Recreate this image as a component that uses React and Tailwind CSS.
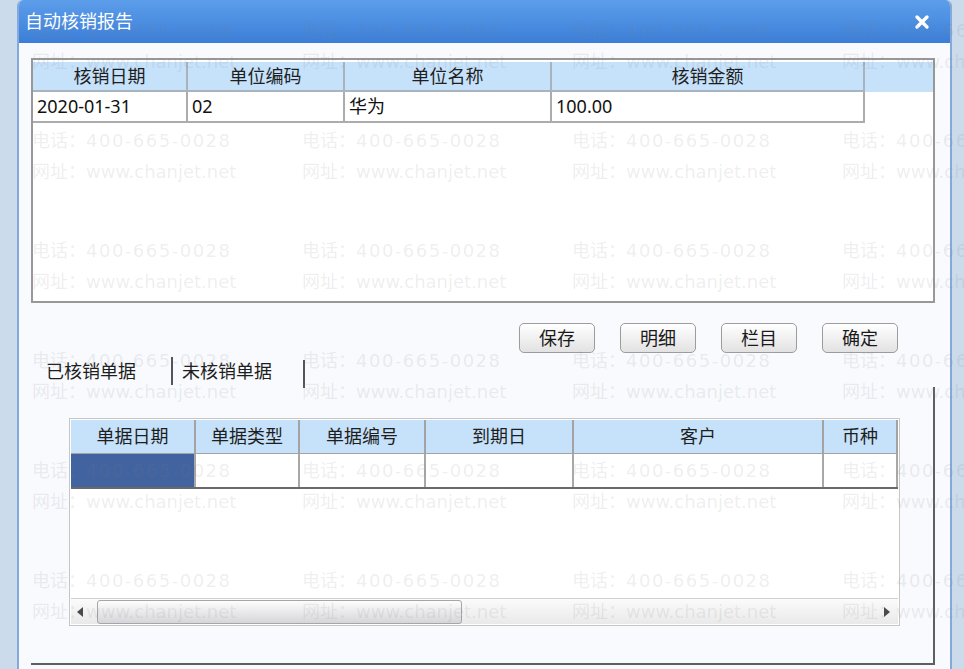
import React from "react";

const topCols = [
  { label: "核销日期", w: "w-[155px]", value: "2020-01-31" },
  { label: "单位编码", w: "w-[157px]", value: "02" },
  { label: "单位名称", w: "w-[207px]", value: "华为" },
  { label: "核销金额", w: "w-[313px]", value: "100.00" },
];

const billCols = [
  { label: "单据日期", w: "w-[125px]" },
  { label: "单据类型", w: "w-[104px]" },
  { label: "单据编号", w: "w-[126px]" },
  { label: "到期日", w: "w-[148px]" },
  { label: "客户", w: "w-[250px]" },
  { label: "币种", w: "w-[74px]" },
];

const Watermark = () => {
  const marks = [];
  for (let r = 0; r < 6; r++) {
    for (let c = 0; c < 4; c++) {
      marks.push({ key: `${r}-${c}`, left: 32 + c * 270, top: 18 + r * 110 });
    }
  }
  return (
    <div className="pointer-events-none absolute inset-0 overflow-hidden">
      {marks.map((m) => (
        <div
          key={m.key}
          className="absolute whitespace-nowrap text-[18px] leading-[24px] text-[rgba(128,128,128,0.14)]"
          style={{ left: m.left, top: m.top }}
        >
          <div>
            电话：<span className="font-['DejaVu_Sans',sans-serif] tracking-[1.5px]">400-665-0028</span>
          </div>
          <div className="mt-[6px]">
            网址：<span className="font-['DejaVu_Sans',sans-serif]">www.chanjet.net</span>
          </div>
        </div>
      ))}
    </div>
  );
};

const Button = ({ children }) => (
  <button className="h-[30px] w-[76px] rounded-[5px] border border-[#9c9c9c] bg-gradient-to-b from-[#ffffff] to-[#e2e2e2] text-[18px] leading-none text-[#1a1a1a] shadow-[inset_0_1px_0_#fff]">
    {children}
  </button>
);

const App = () => {
  return (
    <div className="relative h-[669px] w-[964px] overflow-hidden bg-[#cbdbec] font-['Noto_Sans','Noto_Sans_CJK_SC',sans-serif] text-[#1e1e1e]">
      {/* Window */}
      <div className="ml-[17px] flex h-[669px] w-[935px] flex-col overflow-hidden rounded-t-[6px] border-x-2 border-[#84aadc] bg-[#f8fafd]">
        {/* Title bar */}
        <div className="flex h-[43px] shrink-0 items-center justify-between bg-gradient-to-b from-[#5c9eea] to-[#3c7ed7] pl-[6px] pr-[20px]">
          <span className="text-[18px] text-white">自动核销报告</span>
          <svg width="16" height="16" viewBox="0 0 16 16">
            <path d="M3 3 L13 13 M13 3 L3 13" stroke="#fff" strokeWidth="3.4" strokeLinecap="round" />
          </svg>
        </div>

        <div className="pl-[12px] pr-[15px] pt-[15px]">
          {/* Report panel */}
          <div className="h-[245px] border-2 border-[#989898] bg-white pt-[2px]">
            <div className="flex h-[30px] bg-[#c6e2fb]">
              {topCols.map((c) => (
                <div
                  key={c.label}
                  className={`${c.w} flex items-center justify-center border-r-2 border-b-2 border-[#a9b3bd] text-[18px]`}
                >
                  {c.label}
                </div>
              ))}
            </div>
            <div className="flex h-[31px]">
              {topCols.map((c) => (
                <div
                  key={c.label}
                  className={`${c.w} flex items-center border-r-2 border-b-2 border-[#acacac] pl-[4px] text-[18px] text-[#111]`}
                >
                  {c.value}
                </div>
              ))}
            </div>
          </div>

          {/* Buttons */}
          <div className="mt-[20px] flex justify-end gap-[25px] pr-[37px]">
            <Button>保存</Button>
            <Button>明细</Button>
            <Button>栏目</Button>
            <Button>确定</Button>
          </div>

          {/* Tabs */}
          <div className="mt-[2px] flex h-[32px] items-center pl-[15px] text-[18px]">
            <span>已核销单据</span>
            <span className="ml-[35px] h-[28px] w-[2px] bg-[#555]" />
            <span className="ml-[9px]">未核销单据</span>
            <span className="ml-[31px] mt-[6px] h-[28px] w-[2px] bg-[#555]" />
          </div>

          {/* Bills group */}
          <div className="h-[278px] border-r-2 border-b-2 border-[#5f5f5f] pl-[38px] pt-[31px]">
            <div className="flex h-[208px] w-[831px] flex-col border border-[#c6c6c6] bg-white p-[1px]">
              <div className="flex h-[34px] shrink-0 bg-[#c6e2fb]">
                {billCols.map((c) => (
                  <div
                    key={c.label}
                    className={`${c.w} flex items-center justify-center border-r-2 border-b border-[#a3a3a3] text-[18px]`}
                  >
                    {c.label}
                  </div>
                ))}
              </div>
              <div className="flex h-[35px] shrink-0 border-b-2 border-[#6a6a6a]">
                {billCols.map((c, i) => (
                  <div
                    key={c.label}
                    className={`${c.w} border-r-2 border-[#a8a8a8] ${i === 0 ? "bg-[#4163a0]" : ""}`}
                  />
                ))}
              </div>
              <div className="flex-1" />
              {/* Horizontal scrollbar */}
              <div className="flex h-[26px] shrink-0 items-center border-t border-[#d0d0d0] bg-gradient-to-b from-[#fbfbfb] to-[#e9e9e9]">
                <svg className="ml-[6px]" width="6" height="10" viewBox="0 0 6 10">
                  <polygon points="6,0 0,5 6,10" fill="#4a4a4a" />
                </svg>
                <div className="ml-[14px] h-[24px] w-[365px] rounded-[3px] border border-[#a6a6a6] bg-gradient-to-b from-[#fdfdfd] to-[#d6d6da]" />
                <div className="flex-1" />
                <svg className="mr-[8px]" width="6" height="10" viewBox="0 0 6 10">
                  <polygon points="0,0 6,5 0,10" fill="#4a4a4a" />
                </svg>
              </div>
            </div>
          </div>
        </div>
      </div>

      <Watermark />
    </div>
  );
};

export default App;
